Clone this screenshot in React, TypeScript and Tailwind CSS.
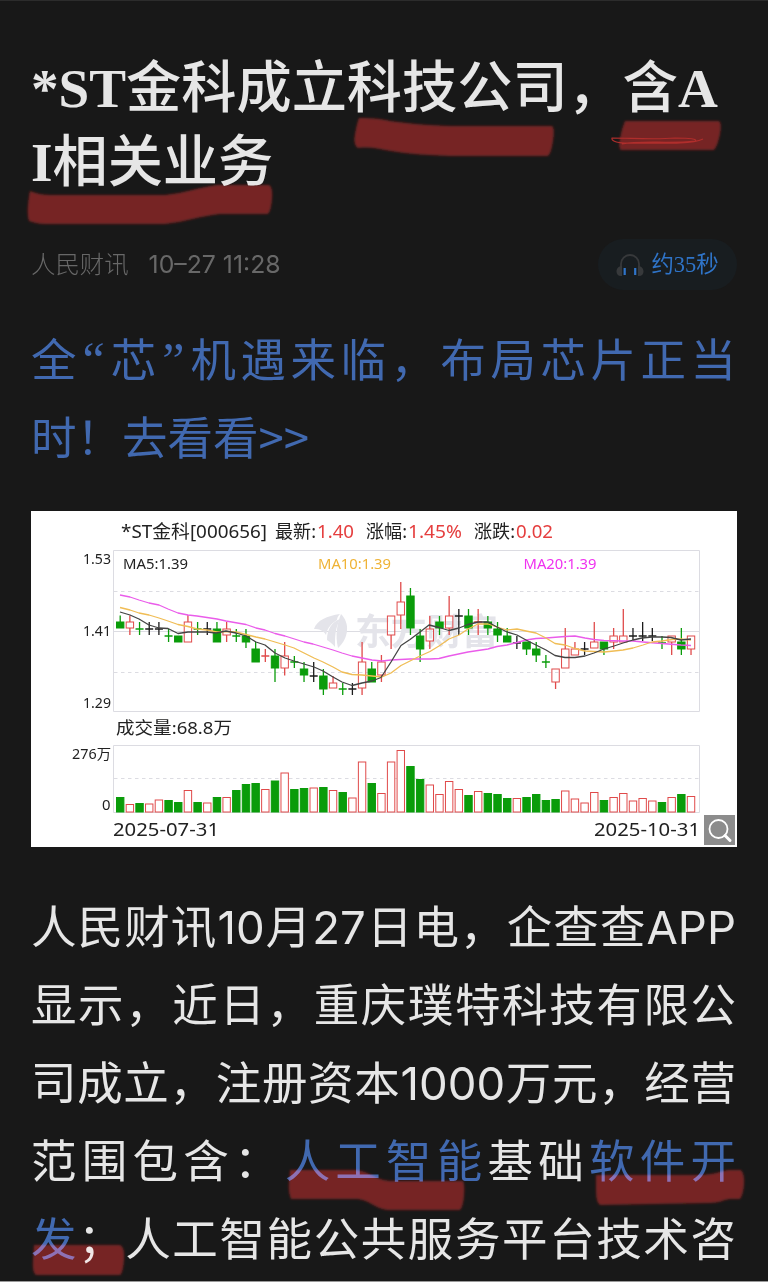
import type { ReactNode } from 'react';

type Tone = 'up' | 'down' | 'flat';

/** tone, high, body top, body bottom, low, volume top (top === bottom draws a cross) */
type Candle = [Tone, number, number, number, number, number, Tone?];

const COLORS: Record<Tone, string> = { up: '#e04a4a', down: '#0a9c0a', flat: '#1c1c1c' };

const CANDLES: Candle[] = [
  ['down', 615.5, 622, 628, 628, 797],
  ['up', 615.5, 622, 628, 635, 804],
  ['down', 622, 629, 629, 635, 803],
  ['flat', 622, 629, 629, 635, 803.5],
  ['flat', 622, 629, 629, 635, 799.5],
  ['down', 629, 636, 636, 642, 800],
  ['down', 636, 636, 642, 642, 802],
  ['up', 615, 622, 642, 642, 790],
  ['down', 622, 629, 629, 635, 802],
  ['flat', 622, 629, 629, 635, 802.5],
  ['down', 622, 629, 642, 642, 797],
  ['up', 622, 629, 635, 642, 797],
  ['down', 629, 636, 636, 642, 790],
  ['down', 629, 636, 642, 648, 784],
  ['down', 642, 649, 662, 662, 783],
  ['up', 649, 656, 656, 662, 789],
  ['down', 649, 656, 668, 682, 780.5],
  ['up', 642, 656, 668, 675.5, 772.5],
  ['down', 656, 662, 662, 668, 789],
  ['down', 662, 669, 675, 682, 788],
  ['flat', 662, 676, 676, 682, 787.5],
  ['down', 669, 676, 689, 695, 787],
  ['up', 676, 683, 688, 688, 790],
  ['down', 683, 689, 689, 695, 792],
  ['flat', 683, 689, 689, 695, 797.5],
  ['up', 642, 662, 688, 695, 761.5],
  ['down', 662, 669, 682, 682, 783],
  ['up', 655, 662, 675, 682, 793],
  ['up', 616, 616, 635, 649, 761.5],
  ['up', 582, 602, 615, 629, 750],
  ['down', 588, 596, 628, 635, 766],
  ['down', 629, 636, 649, 662, 779],
  ['up', 616, 629, 641, 649, 784.5],
  ['down', 616, 622, 628, 635, 794, 'up'],
  ['up', 596, 616, 628, 635, 781],
  ['flat', 609, 616, 616, 635, 789],
  ['down', 609, 616, 628, 635, 795],
  ['up', 609, 622, 622, 635, 791],
  ['down', 616, 622, 628, 635, 793],
  ['down', 622, 629, 635, 642, 794],
  ['down', 628, 636, 642, 642, 798],
  ['flat', 636, 643, 643, 649, 798],
  ['down', 642, 642, 649, 655, 797],
  ['down', 642, 649, 655, 662, 794],
  ['down', 655, 662, 662, 668, 800],
  ['up', 669, 669, 682, 689, 799, 'down'],
  ['up', 628, 649, 668, 668, 790.5],
  ['up', 642, 649, 655, 655, 798.5],
  ['flat', 642, 649, 649, 655, 802.5],
  ['up', 622, 642, 648, 648, 792],
  ['down', 642, 642, 649, 655, 800],
  ['up', 628, 636, 642, 649, 797],
  ['up', 609, 636, 642, 642, 793],
  ['flat', 628, 636, 636, 640, 800.5],
  ['flat', 622, 636, 636, 641, 798],
  ['flat', 628, 636, 636, 641, 800.5],
  ['down', 636, 643, 643, 649, 802],
  ['up', 636, 636, 642, 655, 797],
  ['down', 628, 642, 649, 655, 794],
  ['up', 636, 636, 649, 655, 796],
];

const MA5 =
  '120,612 130,615 139,619 149,625 159,628 168,628.5 178,633.5 188,632 207,632 216,633 226,631 236,633 246,636 256,642 265,645 275,653 285,658 294,661 304,664 314,667 323,671 333,677 342,682 352,685.5 362,683 372,681 381,677.5 391,662 401,645.5 410,639.5 420,632 429,625 439,627.5 449,630.5 459,628 468,624.5 478,622 488,622 497,627 507,632 517,635 526,640 536,645 546,650 555,655.5 565,657.5 575,657.5 585,656 594,653 604,649 614,646 623,643 633,640 642,638 652,637 662,637 671,637.5 681,640 691,639';
const MA10 =
  '120,607.5 130,610 139,613 149,615 159,618 168,621 178,624.5 188,626.5 197,629 207,630 217,632 226,631.5 236,632 246,634.5 256,637 265,639 275,642 285,645 294,648 304,653 314,658 323,662 333,667 342,672 352,674.5 362,675 372,676 382,677 391,673 401,665.5 410,661 420,656 430,651.5 439,646 449,639 459,635 468,629 478,624 488,624 497,627 507,630 517,629 526,631 536,633 546,638 555,643.5 565,645 575,648.5 585,651 594,651.5 604,652 614,651 623,650 633,648 643,645 652,642 662,641 672,639.5 681,639 691,640';
const MA20 =
  '120,595 130,597 139,600 149,603 159,605 168,609 178,613 188,615 197,616 217,619 226,621 246,624.5 256,628 265,630 275,633.5 285,636 304,642 313,644 323,647 333,650 342,653 352,656 362,658 372,660 382,661 391,660 410,659 430,659 439,658.5 449,656 468,652 488,649 497,646.5 507,645 517,642.5 526,640 536,638.5 546,638 565,636.5 575,636 585,638 594,639.5 604,640.5 623,641 633,641 643,642 662,643.5 681,645 691,645.5';

function CandleMark({ candle, index }: { candle: Candle; index: number }) {
  const [tone, high, top, bottom, low, volume, volumeTone] = candle;
  const x = 120.2 + index * 9.675;
  const color = COLORS[tone];
  const volTone = volumeTone ?? (tone === 'flat' ? 'up' : tone);
  const isDown = volTone === 'down';

  return (
    <g>
      {top === bottom ? (
        <path d={`M${x} ${high}V${low}M${x - 4} ${top}h8`} stroke={color} strokeWidth="1.3" />
      ) : (
        <>
          <path d={`M${x} ${high}V${top}M${x} ${bottom}V${low}`} stroke={color} strokeWidth="1.3" />
          <rect
            x={x - 3.7}
            y={top}
            width="7.4"
            height={bottom - top}
            fill={tone === 'down' ? color : 'none'}
            stroke={color}
          />
        </>
      )}
      <rect
        x={x - 3.7}
        y={volume + 0.5}
        width="7.4"
        height={811.5 - volume}
        fill={isDown ? COLORS.down : '#fff'}
        stroke={isDown ? COLORS.down : COLORS.up}
      />
    </g>
  );
}

interface LabelProps {
  x: number;
  y: number;
  size: number;
  width: number;
  color?: string;
  children: ReactNode;
}

function Label({ x, y, size, width, color = '#222', children }: LabelProps) {
  return (
    <text x={x} y={y} fontSize={size} fill={color} textLength={width} lengthAdjust="spacingAndGlyphs">
      {children}
    </text>
  );
}

function StockChart() {
  return (
    <svg
      viewBox="31 511 706 336"
      className="block h-[336px] w-[706px] bg-white font-['Noto_Sans','Noto_Sans_CJK_SC',sans-serif]"
    >
      {/* frames and grid */}
      <g fill="none" stroke="#dcdce2">
        <path d="M113.5 550.5H699.5V711.5H113.5zM113.5 745.5H699.5V812.5H113.5zM114 631.5H699" />
        <path d="M114 591.5H699M114 672.5H699M114 778.5H699" strokeDasharray="3.5 3.5" />
      </g>

      {/* watermark */}
      <g fill="#e4e4ea">
        <path d="M314 629c3-9 13-13 26-15-2 2-3 4-3 6-8 5-10 10-11 15-3-5-7-6-12-6z" />
        <path d="M327 640c0-11 5-18 13-21-5 10-5 18-5 28-2-3-5-5-8-7z" />
        <path d="M338 648c-3-13-1-24 3-34 9 9 8 24-3 34z" />
        <text x="355" y="645" fontSize="36" fontWeight="700" textLength="143" lengthAdjust="spacingAndGlyphs">
          东方财富
        </text>
      </g>

      {CANDLES.map((candle, index) => (
        <CandleMark key={index} candle={candle} index={index} />
      ))}
      <g fill="none" strokeWidth="1.3" strokeLinejoin="round">
        <polyline points={MA20} stroke="#ea5cea" />
        <polyline points={MA10} stroke="#f0bd55" />
        <polyline points={MA5} stroke="#444" />
      </g>

      <Label x={121} y={538} size={18} width={146}>*ST金科[000656]</Label>
      <Label x={275} y={538} size={18} width={41}>最新:</Label>
      <Label x={317} y={538} size={18} width={37} color="#e53e3e">1.40</Label>
      <Label x={366} y={538} size={18} width={41}>涨幅:</Label>
      <Label x={408} y={538} size={18} width={54} color="#e53e3e">1.45%</Label>
      <Label x={474} y={538} size={18} width={41}>涨跌:</Label>
      <Label x={516} y={538} size={18} width={37} color="#e53e3e">0.02</Label>

      <Label x={123} y={568.5} size={14} width={65}>MA5:1.39</Label>
      <Label x={318} y={568.5} size={14} width={73} color="#efb336">MA10:1.39</Label>
      <Label x={523.5} y={568.5} size={14} width={73} color="#f032f0">MA20:1.39</Label>

      <Label x={83} y={564} size={14} width={28}>1.53</Label>
      <Label x={83} y={636} size={14} width={28}>1.41</Label>
      <Label x={83} y={708} size={14} width={28}>1.29</Label>
      <Label x={72} y={759} size={14} width={39}>276万</Label>
      <Label x={102} y={810} size={14} width={8.5}>0</Label>
      <Label x={116} y={734} size={17} width={116}>成交量:68.8万</Label>
      <Label x={113} y={835.5} size={18} width={106}>2025-07-31</Label>
      <Label x={594} y={835.5} size={18} width={106}>2025-10-31</Label>

      {/* zoom button */}
      <rect x="704" y="815" width="31" height="30" fill="#8c8c8c" />
      <g fill="none" stroke="#fff" strokeWidth="1.8" strokeLinecap="round">
        <circle cx="718.5" cy="829" r="9" />
        <path d="M725 835.5l5 5" strokeWidth="3" />
      </g>
    </svg>
  );
}

function HeadphoneIcon() {
  return (
    <svg viewBox="0 0 28 24" className="h-6 w-7">
      <path d="M5 15v-4a9 9 0 0 1 18 0v4" fill="none" stroke="#37393b" strokeWidth="1.8" />
      <path d="M6 13v10C2.500 23.500.5 21.500.5 18.500S2.500 13 6 13zM22 13v10c3.500.5 5.500-1.500 5.500-4.500S25.500 13 22 13z" fill="#37393b" />
      <path d="M8.700 15v7M19.200 15v7" stroke="#2f74c8" strokeWidth="2.200" />
    </svg>
  );
}

function Line({ children, last = false }: { children: ReactNode; last?: boolean }) {
  return (
    <span
      className={
        last
          ? 'block h-[78px] whitespace-nowrap'
          : 'block h-[78px] whitespace-nowrap [text-align-last:justify]'
      }
    >
      {children}
    </span>
  );
}

function Link({ children }: { children: ReactNode }) {
  return <a className="text-[#4169b0]">{children}</a>;
}

function Quote({ children }: { children: ReactNode }) {
  return (
    <span className="px-[1.5px] text-[50px] leading-none font-['Liberation_Serif',serif]">{children}</span>
  );
}

/** Red highlighter strokes drawn over the article. */
function Highlights() {
  return (
    <svg
      viewBox="0 0 768 1282"
      className="pointer-events-none absolute -top-px left-0 h-[1282px] w-[768px] mix-blend-screen"
    >
      <defs>
        <filter id="soft" x="-5%" y="-20%" width="110%" height="140%">
          <feGaussianBlur stdDeviation="1.1" />
        </filter>
      </defs>
      <g fill="#68100e" filter="url(#soft)">
        <path d="M359 118C375 118 382 119 390 121C410 124 440 126 460 126H552Q555 128 553 141T548 156H450C420 155 400 153 385 150C375 148 370 147 358 148Q353 145 355 134T359 118z" />
        <path d="M625 121H719Q722 123 720 134T714 150H621Q618 148 620 138T625 121z" />
        <path d="M30 191C40 195 45 195 60 195H165C185 193 200 187 217 185H269Q273 187 272 199T268 214H220C200 216 185 222 165 224H45C38 224 33 222 29 221Q27 215 28 205T30 191z" />
        <path d="M290 1170H355C370 1171 375 1180 390 1181H463Q465 1185 464 1196T460 1210H390C375 1210 370 1199 355 1199H291Q288 1192 289 1182T290 1170z" />
        <path d="M596 1175H700C720 1174 722 1170 730 1170H741Q745 1175 744 1185T740 1199H730C722 1200 720 1203 710 1203L600 1205Q596 1203 596 1190z" />
        <path d="M34 1245H120Q125 1247 124 1260T120 1275H36Q32 1272 33 1260z" />
      </g>
      <path
        d="M703 139C690 145 660 143 625 143C615 143 611 140 612 138C630 138 655 140 675 138C690 138 698 139 695 141C670 144 640 140 622 144"
        fill="none"
        stroke="#a81816"
        strokeWidth="1.1"
      />
    </svg>
  );
}

export default function App() {
  return (
    <main className="relative flex h-[1282px] w-[768px] flex-col overflow-hidden border-t border-b border-t-[#2c2c2c] border-b-[#9a9a9a] bg-[#181818] px-8 font-['Inter','Noto_Sans_CJK_SC',sans-serif]">
      <h1 className="mt-[51px] -ml-px text-[55.2px] leading-[73.5px] font-bold whitespace-nowrap text-[#e6e6e6] font-['Liberation_Serif','Noto_Sans_CJK_SC',serif]">
        *ST<span className="font-medium">金科成立科技公司，含</span>A
        <br />I<span className="font-medium">相关业务</span>
      </h1>

      <div className="mt-[40px] -mr-[1px] flex h-[51px] items-center justify-between">
        <div className="-ml-px flex items-center gap-5 text-[24.4px] text-[#686868]">
          <span className="font-light">人民财讯</span>
          <span className="text-[24.8px]">10–27 11:28</span>
        </div>
        <button className="flex h-[51px] w-[139px] items-center justify-center gap-[7px] rounded-full bg-[#181d20] text-[22.4px] text-[#2f74c8] font-['Liberation_Serif','Noto_Sans_CJK_SC',serif]">
          <HeadphoneIcon />
          <span>约35秒</span>
        </button>
      </div>

      <p className="mt-[32px] -ml-px text-[45.5px] leading-[78px] text-[#4169b0]">
        <Line>
          全<Quote>“</Quote>芯<Quote>”</Quote>机遇来临，布局芯片正当
        </Line>
        <Line last>
          时！去看看<span className="leading-none font-['Noto_Sans_CJK_SC',sans-serif]">&gt;&gt;</span>
        </Line>
      </p>

      <div className="mt-[33px] -ml-px w-[706px]">
        <StockChart />
      </div>

      <p className="mt-[42px] -ml-px text-[45.5px] leading-[78px] text-[#e6e6e6]">
        <Line>人民财讯10月27日电，企查查APP</Line>
        <Line>显示，近日，重庆璞特科技有限公</Line>
        <Line>司成立，注册资本1000万元，经营</Line>
        <Line>
          范围包含：<Link>人工智能</Link>基础<Link>软件开</Link>
        </Line>
        <Line>
          <Link>发</Link>；人工智能公共服务平台技术咨
        </Line>
      </p>

      <Highlights />
    </main>
  );
}
